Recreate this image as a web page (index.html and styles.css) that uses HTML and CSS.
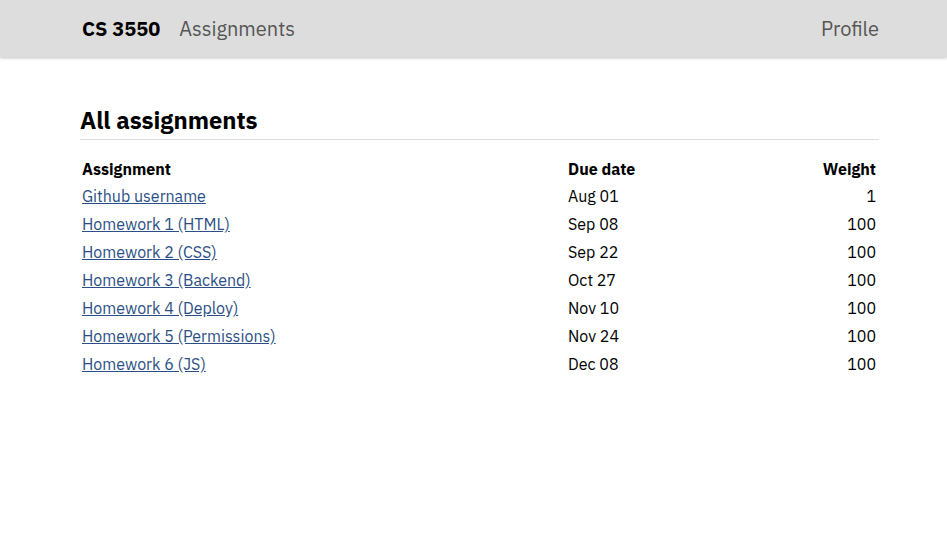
FILE: index.html
```html
<!DOCTYPE html>
<html>
<head>
<meta charset="utf-8">
<title>CS 3550 Assignments</title>
<link rel="stylesheet" href="styles.css">
</head>
<body>
<header class="topbar">
  <nav class="nav">
    <a class="brand" href="#">CS 3550</a>
    <a class="navlink" href="#">Assignments</a>
    <a class="navlink profile" href="#">Profile</a>
  </nav>
</header>
<main class="main">
  <h1 class="title">All assignments</h1>
  <table class="assignments">
    <thead>
      <tr><th class="c-name">Assignment</th><th class="c-due">Due date</th><th class="c-weight">Weight</th></tr>
    </thead>
    <tbody>
      <tr><td><a href="#">Github username</a></td><td>Aug 01</td><td class="c-weight">1</td></tr>
      <tr><td><a href="#">Homework 1 (HTML)</a></td><td>Sep 08</td><td class="c-weight">100</td></tr>
      <tr><td><a href="#">Homework 2 (CSS)</a></td><td>Sep 22</td><td class="c-weight">100</td></tr>
      <tr><td><a href="#">Homework 3 (Backend)</a></td><td>Oct 27</td><td class="c-weight">100</td></tr>
      <tr><td><a href="#">Homework 4 (Deploy)</a></td><td>Nov 10</td><td class="c-weight">100</td></tr>
      <tr><td><a href="#">Homework 5 (Permissions)</a></td><td>Nov 24</td><td class="c-weight">100</td></tr>
      <tr><td><a href="#">Homework 6 (JS)</a></td><td>Dec 08</td><td class="c-weight">100</td></tr>
    </tbody>
  </table>
</main>
</body>
</html>
```
FILE: styles.css
```css
* { box-sizing: border-box; }
html, body { margin: 0; padding: 0; background: #fff; }
body {
  font-family: "IBM Plex Sans", Roboto, "Liberation Sans", sans-serif;
  font-size: 16px;
  color: #000;
}
.topbar {
  background: #dddddd;
  height: 57px;
  box-shadow: 0 1px 3px rgba(0,0,0,0.25);
}
.nav {
  width: 799px;
  margin-left: 80px;
  height: 57px;
  display: flex;
  align-items: center;
  padding: 0 0 0 2px;
  gap: 19px;
}
.nav a { text-decoration: none; }
.brand {
  font-weight: 700;
  font-size: 20px;
  color: #000;
}
.navlink {
  font-size: 20px;
  color: #555;
}
.profile { margin-left: auto; }
.main {
  width: 799px;
  margin-left: 80px;
  padding-top: 49px;
}
.title {
  font-size: 23.8px;
  font-weight: 700;
  margin: 0;
  padding-bottom: 4px;
  border-bottom: 1px solid #dddddd;
  line-height: 29px;
}
.assignments {
  width: 100%;
  border-collapse: collapse;
  margin-top: 16px;
}
.assignments th, .assignments td {
  padding: 0 2px;
  height: 28px;
  text-align: left;
  vertical-align: middle;
}
.assignments th { height: 26px; font-weight: 700; }
.c-name { width: 486px; }
.assignments .c-weight { text-align: right; padding-right: 3px; }
.assignments a { color: #2b4f85; text-decoration: underline; }
```
